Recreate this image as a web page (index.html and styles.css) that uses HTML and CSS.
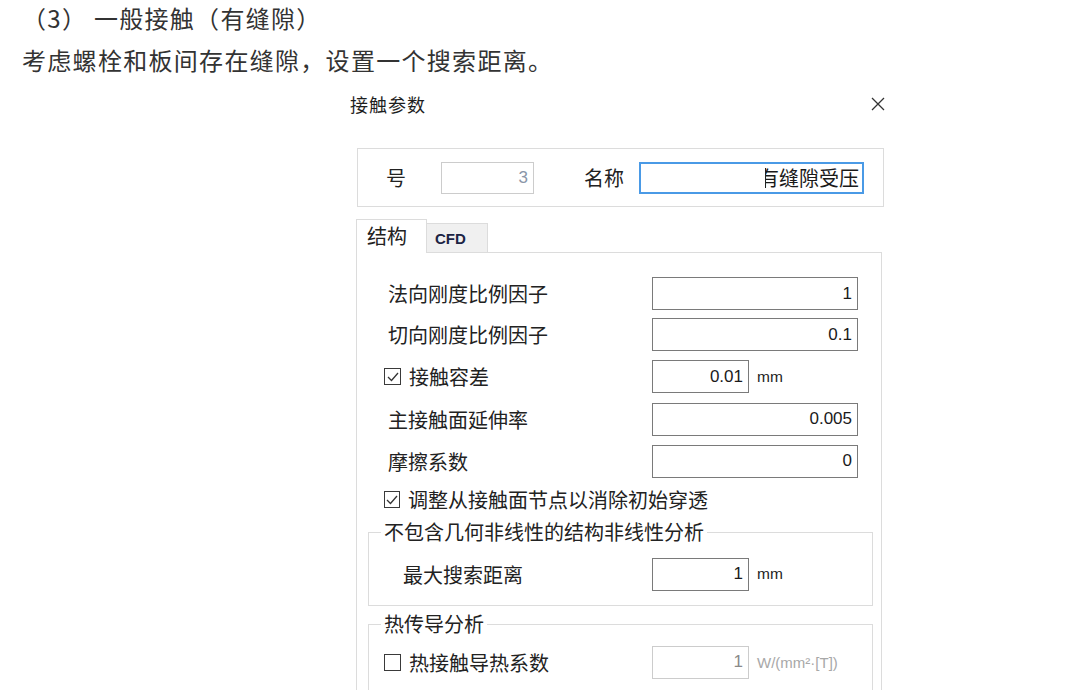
FILE: index.html
```html
<!DOCTYPE html>
<html>
<head>
    <meta charset="utf-8">
    <link rel="stylesheet" href="styles.css">
</head>
<body>
<div class="doc">
    <p class="step">（3） 一般接触（有缝隙）</p>
    <p class="desc">考虑螺栓和板间存在缝隙，设置一个搜索距离。</p>
</div>

<div class="dialog">
    <div class="title-bar">
        <span class="title">接触参数</span>
        <svg class="close" width="14" height="14" viewBox="0 0 14 14">
            <path d="M1 1 L13 13 M13 1 L1 13" stroke="#333" stroke-width="1.3" fill="none"/>
        </svg>
    </div>

    <div class="id-box">
        <span class="id-label">号</span>
        <span class="field id-field">3</span>
        <span class="name-label">名称</span>
        <span class="field name-field"><span class="caret"></span><span class="name-clip"><span>有缝隙受压</span></span></span>
    </div>

    <div class="tabs">
        <div class="tab active">结构</div>
        <div class="tab">CFD</div>
    </div>

    <div class="panel">
        <div class="row r1">
            <span class="label plain">法向刚度比例因子</span>
            <span class="field wide">1</span>
        </div>
        <div class="row r2">
            <span class="label plain">切向刚度比例因子</span>
            <span class="field wide">0.1</span>
        </div>
        <div class="row r3">
            <span class="label"><span class="cb checked"><svg width="14" height="14" viewBox="0 0 14 14"><path d="M2 7 L5.5 10.5 L12 3" stroke="#333" stroke-width="1.3" fill="none"/></svg></span>接触容差</span>
            <span class="field short">0.01</span>
            <span class="unit">mm</span>
        </div>
        <div class="row r4">
            <span class="label plain">主接触面延伸率</span>
            <span class="field wide">0.005</span>
        </div>
        <div class="row r5">
            <span class="label plain">摩擦系数</span>
            <span class="field wide">0</span>
        </div>
        <div class="row r6">
            <span class="label"><span class="cb checked"><svg width="14" height="14" viewBox="0 0 14 14"><path d="M2 7 L5.5 10.5 L12 3" stroke="#333" stroke-width="1.3" fill="none"/></svg></span>调整从接触面节点以消除初始穿透</span>
        </div>

        <fieldset class="group nonlinear">
            <legend>不包含几何非线性的结构非线性分析</legend>
            <div class="row">
                <span class="label search">最大搜索距离</span>
                <span class="field short">1</span>
                <span class="unit">mm</span>
            </div>
        </fieldset>

        <fieldset class="group heat">
            <legend>热传导分析</legend>
            <div class="row">
                <span class="label"><span class="cb"></span>热接触导热系数</span>
                <span class="field short disabled">1</span>
                <span class="unit disabled">W/(mm²·[T])</span>
            </div>
        </fieldset>
    </div>
</div>
</body>
</html>
```

FILE: styles.css
```css
* {
    box-sizing: border-box;
}

body {
    margin: 0;
    background-color: #ffffff;
    font-family: "Noto Sans CJK SC", sans-serif;
    color: #222222;
    overflow: hidden;
}

.doc {
    padding-left: 22px;
}

.doc p {
    margin: 0;
    font-size: 24px;
    letter-spacing: 1.3px;
    line-height: 36px;
    color: #333333;
}

.doc .desc {
    margin-top: 6px;
}

.dialog {
    margin: 6px 0 0 342px;
    width: 548px;
}

.title-bar {
    display: flex;
    justify-content: space-between;
    align-items: center;
    height: 40px;
    padding: 0 5px 0 8px;
}

.title {
    font-size: 18px;
    letter-spacing: 1px;
    color: #1e1e1e;
}

.id-box {
    display: flex;
    align-items: center;
    height: 59px;
    margin: 24px 6px 0 15px;
    padding-left: 28px;
    border: 1px solid #dcdcdc;
}

.id-label {
    width: 55px;
    font-size: 20px;
}

.name-label {
    width: 40px;
    margin: 0 15px 0 50px;
    font-size: 20px;
}

.field {
    display: flex;
    align-items: center;
    justify-content: flex-end;
    height: 33px;
    padding-right: 5px;
    border: 1px solid #7a7a7a;
    background-color: #ffffff;
    font-family: "Liberation Sans", Arial, sans-serif;
    font-size: 17px;
    color: #1a1a1a;
}

.id-field {
    width: 93px;
    height: 32px;
    border-color: #cccccc;
    color: #8a96a8;
}

.name-field {
    width: 225px;
    height: 32px;
    border: 2px solid #4a9ae6;
    padding-right: 3px;
}

.caret {
    width: 1px;
    height: 20px;
    background-color: #222222;
}

.name-clip {
    display: flex;
    justify-content: flex-end;
    width: 93px;
    overflow: hidden;
    font-family: "Noto Sans CJK SC", sans-serif;
    font-size: 20px;
    white-space: nowrap;
}

.name-clip span {
    flex: none;
}

.tabs {
    display: flex;
    align-items: flex-end;
    margin: 12px 0 0 14px;
}

.tab {
    width: 61px;
    height: 29px;
    padding-left: 8px;
    border: 1px solid #dcdcdc;
    border-left: none;
    border-bottom: none;
    background-color: #f0f0f0;
    font-family: "Liberation Sans", Arial, sans-serif;
    font-weight: bold;
    font-size: 15px;
    line-height: 30px;
    color: #1c2444;
}

.tab.active {
    position: relative;
    z-index: 1;
    width: 71px;
    height: 34px;
    margin-bottom: -1px;
    padding-left: 10px;
    border-left: 1px solid #dcdcdc;
    background-color: #ffffff;
    font-family: "Noto Sans CJK SC", sans-serif;
    font-weight: normal;
    font-size: 20px;
    line-height: 32px;
    color: #222222;
}

.panel {
    height: 460px;
    margin: 0 8px 0 14px;
    padding-top: 20px;
    border: 1px solid #dcdcdc;
    border-bottom: none;
}

.row {
    display: flex;
    align-items: center;
    height: 42px;
    padding-left: 27px;
}

.r1, .r2 {
    height: 41px;
}

.r3 {
    height: 43px;
}

.r6 {
    height: 35px;
}

.label {
    display: flex;
    align-items: center;
    width: 268px;
    font-size: 20px;
    white-space: nowrap;
}

.label.plain {
    padding-left: 4px;
}

.cb {
    display: inline-flex;
    align-items: center;
    justify-content: center;
    width: 17px;
    height: 17px;
    margin-right: 8px;
    border: 1.5px solid #3a3a3a;
}

.field.wide {
    width: 206px;
}

.field.short {
    width: 97px;
}

.unit {
    margin-left: 8px;
    font-family: "Liberation Sans", Arial, sans-serif;
    font-size: 15.5px;
    color: #222222;
}

.field.disabled {
    border-color: #cccccc;
    color: #8a8a8a;
}

.unit.disabled {
    font-size: 15px;
    color: #a8a8a8;
}

.group {
    min-width: 0;
    width: 505px;
    margin: 3px 0 0 11px;
    padding: 0;
    border: 1px solid #dcdcdc;
}

.group legend {
    margin-left: 12px;
    padding: 0 3px;
    font-size: 20px;
    line-height: 24px;
}

.group .row {
    padding-left: 15px;
}

.nonlinear {
    padding: 9px 0 10px 0;
}

.nonlinear .row {
    padding-left: 34px;
}

.label.search {
    width: 249px;
}

.heat {
    margin-top: 6px;
    padding: 5px 0 20px 0;
}
```
